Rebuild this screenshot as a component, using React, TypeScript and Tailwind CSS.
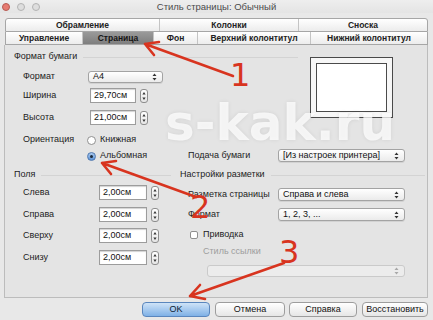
import React from "react"

function UpDown({ color = "#333" }: { color?: string }) {
  return (
    <svg width="5" height="8" viewBox="0 0 5 8" className="shrink-0">
      <path d="M2.5 0.5 L4.5 3 H0.5Z M2.5 7.5 L4.5 5 H0.5Z" fill={color} />
    </svg>
  )
}

function Stepper() {
  return (
    <div className="ml-[4px] flex h-[14px] w-[8px] items-center justify-center rounded-[3px] border border-[#8e8e8e] bg-linear-to-b from-white to-[#e4e4e4]">
      <svg width="4" height="10" viewBox="0 0 4 10">
        <path d="M2 1 L3.6 3.6 H0.4Z M2 9 L3.6 6.4 H0.4Z" fill="#333" />
      </svg>
    </div>
  )
}

function Select({ value, className = "" }: { value: string; className?: string }) {
  return (
    <div
      className={`flex shrink-0 items-center justify-between rounded-[3px] border border-[#a3a3a3] bg-linear-to-b from-white to-[#ebebeb] pl-[4px] pr-[5px] shadow-[0_1px_0_rgba(0,0,0,0.08)] ${className}`}
    >
      <span className="leading-none text-[#111]">{value}</span>
      <UpDown />
    </div>
  )
}

function Spin({ label, value, labelW, inputW }: { label: string; value: string; labelW: string; inputW: string }) {
  return (
    <div className="flex items-center">
      <span className={`shrink-0 ${labelW}`}>{label}</span>
      <div
        className={`flex h-[15px] shrink-0 ${inputW} items-center border border-[#9c9c9c] bg-white pl-[3px] text-[#111] shadow-[inset_0_1px_1px_rgba(0,0,0,0.18)]`}
      >
        {value}
      </div>
      <Stepper />
    </div>
  )
}

function Radio({ checked }: { checked?: boolean }) {
  return (
    <span
      className={`flex h-[9px] w-[9px] shrink-0 items-center justify-center rounded-full border ${
        checked ? "border-[#4f78b0] bg-linear-to-b from-[#a9c9ee] to-[#5d93d6]" : "border-[#8f8f8f] bg-white"
      }`}
    >
      {checked && <span className="h-[3px] w-[3px] rounded-full bg-[#1d2a3a]" />}
    </span>
  )
}

function Heading({ text, lineW }: { text: string; lineW: string }) {
  return (
    <div className="flex h-[12px] items-center">
      <span className="shrink-0">{text}</span>
      <span className={`ml-[6px] h-px shrink-0 ${lineW} bg-[#d3d3d3]`} />
    </div>
  )
}

function Button({ label, primary, w }: { label: string; primary?: boolean; w: string }) {
  return (
    <div
      className={`flex h-[15px] ${w} items-center justify-center rounded-[4px] border ${
        primary
          ? "border-[#5a86bd] bg-linear-to-b from-[#cfe3f7] to-[#7fb1e6] text-[#0d1d33]"
          : "border-[#9d9d9d] bg-linear-to-b from-white to-[#e6e6e6] text-[#111]"
      }`}
    >
      {label}
    </div>
  )
}

export default function App() {
  const tabRow1 = [
    { t: "Обрамление", w: "w-[154px]" },
    { t: "Колонки", w: "w-[139px]" },
    { t: "Сноска", w: "flex-1" },
  ]
  const tabRow2 = [
    { t: "Управление", w: "w-[77px]" },
    { t: "Страница", w: "w-[71px]", active: true },
    { t: "Фон", w: "w-[44px]" },
    { t: "Верхний колонтитул", w: "w-[113px]" },
    { t: "Нижний колонтитул", w: "flex-1" },
  ]

  return (
    <div className="relative h-[320px] w-[433px] overflow-hidden whitespace-nowrap bg-[#e8e8e8] font-['Liberation_Sans',Arial,sans-serif] text-[9px] text-[#1c1c1c]">
      {/* title bar */}
      <div className="grid h-[13px] grid-cols-[1fr_auto_1fr] items-center bg-linear-to-b from-[#eeeeee] to-[#e4e4e4]">
        <div className="flex gap-[7px] pl-[2px]">
          <span className="h-[8px] w-[8px] rounded-full border border-[#b65a52] bg-[#e77b71]" />
          <span className="h-[8px] w-[8px] rounded-full border border-[#b3b3b3] bg-[#dedede]" />
          <span className="h-[8px] w-[8px] rounded-full border border-[#b3b3b3] bg-[#dedede]" />
        </div>
        <div className="text-[9.5px] text-[#4b4b4b]">Стиль страницы: Обычный</div>
        <div />
      </div>

      {/* tabs */}
      <div className="ml-[5px] mt-[5px] w-[423px] text-[8.5px] font-bold text-[#222]">
        <div className="flex h-[14px] rounded-t-[3px] border border-[#a6a6a6] bg-linear-to-b from-white to-[#ececec]">
          {tabRow1.map((tab, i) => (
            <div
              key={tab.t}
              className={`flex ${tab.w} items-center justify-center ${i < 2 ? "border-r border-[#c4c4c4]" : ""}`}
            >
              {tab.t}
            </div>
          ))}
        </div>
        <div className="flex h-[13px] border-x border-b border-[#a6a6a6] bg-linear-to-b from-white to-[#ececec]">
          {tabRow2.map((tab, i) => (
            <div
              key={tab.t}
              className={`flex ${tab.w} items-center justify-center ${i < 4 ? "border-r border-[#c4c4c4]" : ""} ${
                tab.active ? "bg-linear-to-b from-[#9a9a9a] to-[#7e7e7e] text-[#151515]" : ""
              }`}
            >
              {tab.t}
            </div>
          ))}
        </div>
      </div>

      {/* page panel */}
      <div className="ml-[4px] flex h-[253px] w-[424px] border border-t-0 border-[#bcbcbc] bg-[#e4e4e4]">
        {/* left column */}
        <div className="flex w-[175px] shrink-0 flex-col pl-[9px]">
          <div className="mt-[6px]">
            <Heading text="Формат бумаги" lineW="w-[215px]" />
          </div>
          <div className="mt-[7px] flex h-[13px] items-center pl-[9px]">
            <span className="w-[65px] shrink-0">Формат</span>
            <Select value="A4" className="h-[12px] w-[75px]" />
          </div>
          <div className="mt-[5px] pl-[9px]">
            <Spin label="Ширина" value="29,70см" labelW="w-[67px]" inputW="w-[46px]" />
          </div>
          <div className="mt-[7px] pl-[9px]">
            <Spin label="Высота" value="21,00см" labelW="w-[67px]" inputW="w-[46px]" />
          </div>
          <div className="mt-[9px] flex h-[12px] items-center pl-[9px]">
            <span className="w-[64px] shrink-0">Ориентация</span>
            <Radio />
            <span className="ml-[4px]">Книжная</span>
          </div>
          <div className="mt-[4px] flex h-[12px] items-center pl-[73px]">
            <Radio checked />
            <span className="ml-[4px]">Альбомная</span>
          </div>
          <div className="mt-[7px]">
            <Heading text="Поля" lineW="w-[130px]" />
          </div>
          <div className="mt-[4px] pl-[9px]">
            <Spin label="Слева" value="2,00см" labelW="w-[76px]" inputW="w-[48px]" />
          </div>
          <div className="mt-[7px] pl-[9px]">
            <Spin label="Справа" value="2,00см" labelW="w-[76px]" inputW="w-[48px]" />
          </div>
          <div className="mt-[6px] pl-[9px]">
            <Spin label="Сверху" value="2,00см" labelW="w-[76px]" inputW="w-[48px]" />
          </div>
          <div className="mt-[7px] pl-[9px]">
            <Spin label="Снизу" value="2,00см" labelW="w-[76px]" inputW="w-[48px]" />
          </div>
        </div>

        {/* right column */}
        <div className="flex w-[248px] shrink-0 flex-col">
          <div className="ml-[130px] mt-[12px] h-[61px] w-[83px] border border-[#4a4a4a] bg-[#f7f7f7] p-[5px]">
            <div className="h-full w-full border border-[#4a4a4a] bg-white" />
          </div>
          <div className="mt-[31px] flex h-[13px] items-center pl-[8px]">
            <span className="w-[90px] shrink-0">Подача бумаги</span>
            <Select value="[Из настроек принтера]" className="h-[13px] w-[127px]" />
          </div>
          <div className="mt-[7px] flex h-[12px] items-center">
            <span className="shrink-0">Настройки разметки</span>
            <span className="ml-[6px] mr-[3px] h-px flex-1 bg-[#d3d3d3]" />
          </div>
          <div className="mt-[7px] flex h-[13px] items-center pl-[8px]">
            <span className="w-[90px] shrink-0">Разметка страницы</span>
            <Select value="Справа и слева" className="h-[13px] w-[127px]" />
          </div>
          <div className="mt-[7px] flex h-[13px] items-center pl-[8px]">
            <span className="w-[90px] shrink-0">Формат</span>
            <Select value="1, 2, 3, ..." className="h-[13px] w-[127px]" />
          </div>
          <div className="mt-[9px] flex h-[10px] items-center pl-[10px]">
            <span className="h-[8px] w-[8px] rounded-[2px] border border-[#8f8f8f] bg-white" />
            <span className="ml-[5px]">Приводка</span>
          </div>
          <div className="mt-[6px] flex h-[12px] items-center pl-[23px] text-[#9d9d9d]">Стиль ссылки</div>
          <div className="ml-[27px] mt-[7px] flex h-[12px] w-[198px] items-center justify-end rounded-[3px] border border-[#cacaca] bg-[#ececec] pr-[5px]">
            <UpDown color="#a8a8a8" />
          </div>
        </div>
      </div>

      {/* buttons */}
      <div className="mt-[4px] flex pl-[142px]">
        <Button label="OK" primary w="w-[68px]" />
        <div className="ml-[5px]">
          <Button label="Отмена" w="w-[70px]" />
        </div>
        <div className="ml-[4px]">
          <Button label="Справка" w="w-[68px]" />
        </div>
        <div className="ml-[5px]">
          <Button label="Восстановить" w="w-[66px]" />
        </div>
      </div>

      {/* watermark */}
      <div className="pointer-events-none absolute left-[165px] top-[98px] font-['DejaVu_Sans',sans-serif] text-[50px] font-bold leading-none text-white/75 [text-shadow:0_0_4px_rgba(0,0,0,0.08)]">
        s-kak.ru
      </div>

      {/* red annotations */}
      <svg className="pointer-events-none absolute inset-0" width="433" height="320" viewBox="0 0 433 320">
        <g fill="none" stroke="#d8341f" strokeWidth="2.6" strokeLinecap="round" strokeLinejoin="round">
          <path d="M233 76 L145 44 M145 44 L154 55 M145 44 L159 42" />
          <path d="M196 197 L102 163 M102 163 L111 174 M102 163 L116 161" />
          <path d="M284 263 L190 296 M190 296 L200 285 M190 296 L205 299" />
        </g>
      </svg>
      <span className="pointer-events-none absolute left-[230px] top-[59px] font-['DejaVu_Sans',sans-serif] text-[32px] leading-none text-[#d8341f]">
        1
      </span>
      <span className="pointer-events-none absolute left-[190px] top-[191px] font-['DejaVu_Sans',sans-serif] text-[32px] leading-none text-[#d8341f]">
        2
      </span>
      <span className="pointer-events-none absolute left-[279px] top-[236px] font-['DejaVu_Sans',sans-serif] text-[32px] leading-none text-[#d8341f]">
        3
      </span>
    </div>
  )
}
